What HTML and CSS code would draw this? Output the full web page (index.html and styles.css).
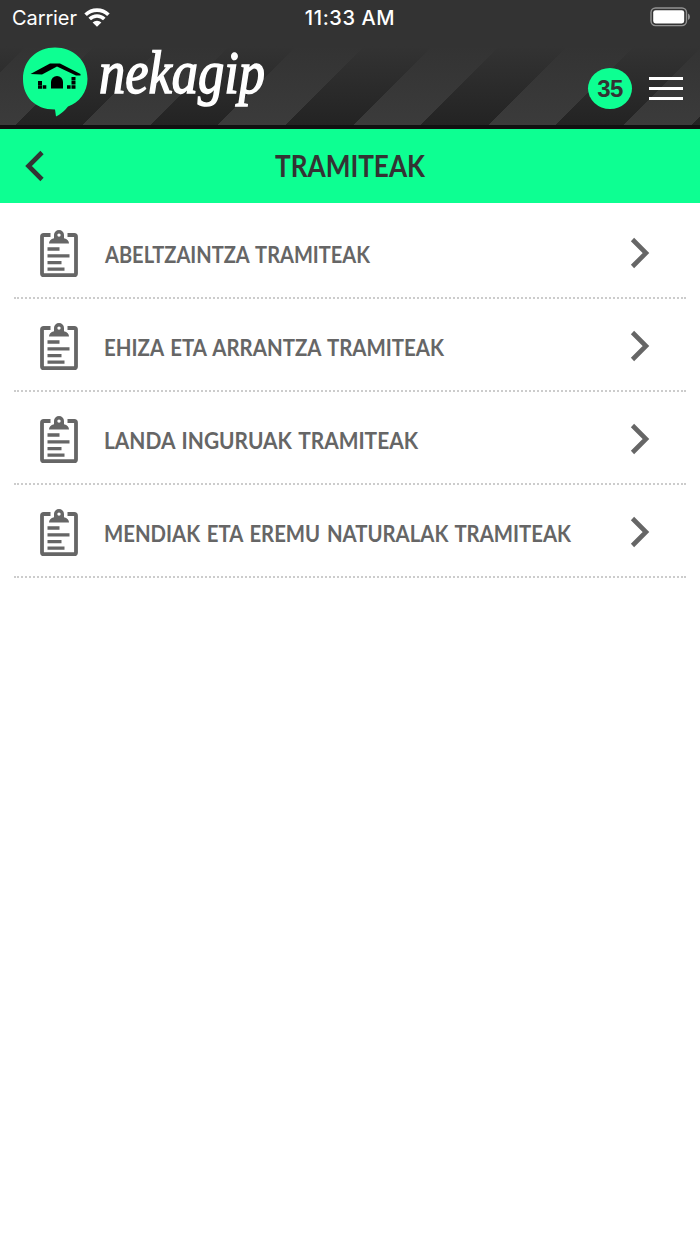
FILE: index.html
```
<!DOCTYPE html>
<html lang="eu">
<head>
    <meta charset="UTF-8">
    <meta name="viewport" content="width=device-width, initial-scale=1.0">
    <title>nekagip - Tramiteak</title>
    <link rel="stylesheet" href="styles.css">
</head>
<body>
    <svg class="sprite" width="0" height="0">
        <symbol id="clipboard" viewBox="0 0 38 48">
            <path d="M10.5 5H3.8Q2 5 2 6.8V43.4Q2 45.2 3.8 45.2H34.2Q36 45.2 36 43.4V6.8Q36 5 34.2 5H27.5" fill="none" stroke="currentColor" stroke-width="3.8"/>
            <path fill-rule="evenodd" d="M9 13.5Q9 9.5 14 8.2V5A5 5 0 0 1 24 5V8.2Q29 9.5 29 13.5ZM19 3.4A1.7 1.7 0 1 0 19 6.8A1.7 1.7 0 1 0 19 3.4Z" fill="currentColor"/>
            <path d="M7.5 19H19.5M7.5 25.8H29.5M7.5 32.6H21.5M7.5 39.2H24.5" fill="none" stroke="currentColor" stroke-width="3.3"/>
        </symbol>
        <symbol id="arrow" viewBox="0 0 20 32">
            <path d="M2.5 2.5L16 16L2.5 29.5" fill="none" stroke="currentColor" stroke-width="4.6"/>
        </symbol>
    </svg>

    <header class="header">
        <div class="status">
            <div class="carrier">
                <span>Carrier</span>
                <svg class="wifi" viewBox="0 0 26 19">
                    <path d="M1.6 6.8A16.2 16.2 0 0 1 24.4 6.8M5.7 11.1A10.3 10.3 0 0 1 20.3 11.1" fill="none" stroke="#fff" stroke-width="3.6"/>
                    <path d="M8.6 14.5A6.2 6.2 0 0 1 17.4 14.5L13 18.8Z" fill="#fff"/>
                </svg>
            </div>
            <span class="time">11:33 AM</span>
            <svg class="battery" viewBox="0 0 42 20">
                <rect x="2" y="1" width="35.5" height="17.6" rx="4.5" fill="none" stroke="#929292" stroke-width="1.4"/>
                <rect x="4.2" y="3.2" width="31" height="13.2" rx="2.4" fill="#fff"/>
                <path d="M39 6.5Q41 7.5 41 9.8T39 13.1Z" fill="#929292"/>
            </svg>
        </div>
        <div class="topbar">
            <svg class="logo" viewBox="0 -9 250 89">
                <path d="M33 64.5C12 64.5 1 51 1 34C1 15 15 2.5 33 2.5S65.5 15 65.5 34C65.5 47 57 58 46 61.5Q41 68 34 71.5Z" fill="#0dff92"/>
                <path d="M8.5 29L28 18.5H38L58.5 29V30.5H54L35 21.5L20 29.5Z" fill="#000"/>
                <path d="M29 43.5V37A6 6 0 0 1 41 37V43.5Z" fill="#000"/>
                <path d="M16 36h4v4h-4zM16 40.3h4v3.4h-4zM20.7 40.3h3.6v3.4h-3.6zM45 40.3h3.6v3.4h-3.6zM49.5 40.3h4v3.4h-4zM49.5 36h4v3.6h-4zM49.5 32h4v3.5h-4z" fill="#000"/>
                <text class="brand" x="77" y="48" textLength="166" lengthAdjust="spacingAndGlyphs">nekagip</text>
            </svg>
            <span class="badge">35</span>
            <div class="menu">
                <span></span>
                <span></span>
                <span></span>
            </div>
        </div>
    </header>

    <div class="title">
        <svg class="back" viewBox="0 0 20 32">
            <path d="M17 2.5L3.5 16L17 29.5" fill="none" stroke="#333" stroke-width="4.6"/>
        </svg>
        <h1>
            <svg width="156" height="40"><text x="3" y="30.500" textLength="150" lengthAdjust="spacingAndGlyphs">TRAMITEAK</text></svg>
        </h1>
    </div>

    <ul class="list">
        <li>
            <svg class="icon"><use href="#clipboard"/></svg>
            <svg class="name"><text x="0" y="25" textLength="265" lengthAdjust="spacingAndGlyphs">ABELTZAINTZA TRAMITEAK</text></svg>
            <svg class="arrow"><use href="#arrow"/></svg>
        </li>
        <li>
            <svg class="icon"><use href="#clipboard"/></svg>
            <svg class="name"><text x="-1" y="25" textLength="340" lengthAdjust="spacingAndGlyphs">EHIZA ETA ARRANTZA TRAMITEAK</text></svg>
            <svg class="arrow"><use href="#arrow"/></svg>
        </li>
        <li>
            <svg class="icon"><use href="#clipboard"/></svg>
            <svg class="name"><text x="-1" y="25" textLength="314" lengthAdjust="spacingAndGlyphs">LANDA INGURUAK TRAMITEAK</text></svg>
            <svg class="arrow"><use href="#arrow"/></svg>
        </li>
        <li>
            <svg class="icon"><use href="#clipboard"/></svg>
            <svg class="name"><text x="-1" y="25" textLength="467" lengthAdjust="spacingAndGlyphs">MENDIAK ETA EREMU NATURALAK TRAMITEAK</text></svg>
            <svg class="arrow"><use href="#arrow"/></svg>
        </li>
    </ul>
</body>
</html>
```
FILE: styles.css
```
* {
    box-sizing: border-box;
}
body {
    margin: 0;
    background-color: #fff;
    font-family: Lato, "Liberation Sans", sans-serif;
}
.sprite {
    display: block;
}
.header {
    height: 129px;
    border-bottom: 4px solid #111;
    color: #fff;
    /* diagonal stripes fading in below the status bar */
    background:
        linear-gradient(#333 46px, rgba(51, 51, 51, 0)),
        repeating-linear-gradient(135deg, #3b3b3b 0, #3b3b3b 3.4px, #232323 3.4px, #232323 51.2px, #3b3b3b 51.2px, #3b3b3b 95.6px);
}
.status {
    display: grid;
    grid-template-columns: 1fr auto 1fr;
    align-items: center;
    height: 36px;
    padding: 0 9px 0 12px;
    font-family: Inter, sans-serif;
    font-size: 20px;
}
.carrier {
    display: flex;
    align-items: center;
    gap: 7px;
    letter-spacing: -0.1px;
}
.wifi {
    width: 26px;
    height: 19px;
    margin-bottom: 2px;
}
.time {
    margin-right: 3px;
    font-weight: 500;
    letter-spacing: 0.6px;
}
.battery {
    width: 42px;
    height: 20px;
    justify-self: end;
    margin-bottom: 2px;
}
.topbar {
    display: flex;
    align-items: center;
    height: 89px;
    padding: 0 17px 0 22px;
}
.logo {
    width: 250px;
    height: 89px;
    overflow: visible;
}
.brand {
    fill: #fff;
    stroke: #fff;
    stroke-width: 1.6px;
    font-family: "Liberation Serif", serif;
    font-size: 61px;
    font-style: italic;
}
.badge {
    width: 44px;
    height: 41px;
    margin-top: 15px;
    margin-left: auto;
    border-radius: 50%;
    background-color: #0dff92;
    color: #333;
    font-family: "Liberation Sans", sans-serif;
    font-size: 24px;
    font-weight: bold;
    letter-spacing: -0.6px;
    line-height: 41px;
    text-align: center;
}
.menu {
    display: flex;
    flex-direction: column;
    gap: 7px;
    width: 34px;
    margin-top: 15px;
    margin-left: 17px;
}
.menu span {
    height: 3px;
    background-color: #fff;
}
.title {
    display: grid;
    grid-template-columns: 20px 1fr 20px;
    align-items: center;
    height: 74px;
    padding: 0 25px;
    background-color: #0dff92;
}
.back {
    width: 20px;
    height: 32px;
}
.title h1 {
    display: flex;
    justify-content: center;
    margin: 0;
    fill: #333;
    font-size: 30px;
}
.title h1 svg {
    overflow: visible;
}
.list {
    margin: 0;
    padding: 3px 14px 0;
    list-style: none;
    color: #666;
}
.list li {
    display: flex;
    align-items: center;
    height: 93px;
    padding: 1px 36px 0 26px;
    border-bottom: 2px dotted #ccc;
}
.icon {
    width: 38px;
    height: 48px;
    margin-top: 4px;
}
.name {
    flex: 1;
    height: 32px;
    margin-top: 3px;
    margin-left: 27px;
    overflow: visible;
    fill: currentColor;
    font-size: 23px;
    font-weight: bold;
    word-spacing: 2px;
}
.arrow {
    width: 20px;
    height: 32px;
    margin-top: 2px;
}
```
